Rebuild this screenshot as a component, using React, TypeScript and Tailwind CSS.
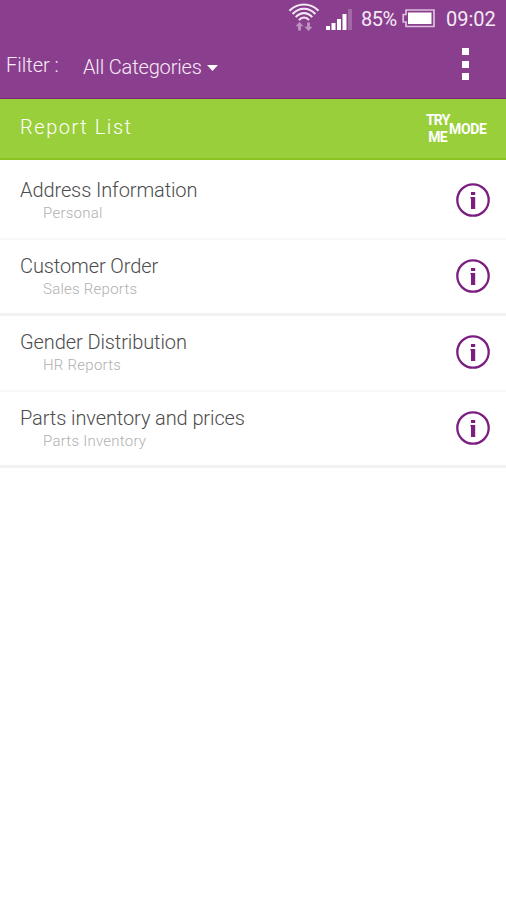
const reports = [
  { title: "Address Information", category: "Personal" },
  { title: "Customer Order", category: "Sales Reports" },
  { title: "Gender Distribution", category: "HR Reports" },
  { title: "Parts inventory and prices", category: "Parts Inventory" },
];

function WifiIcon() {
  return (
    <svg width="32" height="30" viewBox="0 0 32 30" fill="none">
      <g stroke="#f6e9f6" strokeWidth="2.1">
        <path d="M1.5 8.8C9.5 0.4 22.5 0.4 30.5 8.8" />
        <path d="M4.6 12C11 5 21 5 27.4 12" />
        <path d="M7.8 15.2C12.4 9.7 19.6 9.7 24.2 15.2" />
        <path d="M11 18.2C13.8 14.6 18.2 14.6 21 18.2" />
      </g>
      <g fill="#c193c3">
        <path d="M11.5 20l4 4.3h-2.6V28.5h-2.8v-4.2H7.5z" />
        <path d="M20.5 29l-4-4.3h2.6v-4.2h2.8v4.2h2.6z" />
      </g>
    </svg>
  );
}

function SignalIcon() {
  return (
    <svg width="27" height="22" viewBox="0 0 27 22" fill="#ffffff">
      <rect x="0" y="17" width="4" height="4" />
      <rect x="5.5" y="14" width="4" height="7" />
      <rect x="11" y="10" width="4" height="11" />
      <rect x="16.5" y="5" width="4" height="16" />
      <rect x="22" y="0" width="4" height="21" fill="#a468a6" />
    </svg>
  );
}

function BatteryIcon() {
  return (
    <svg width="34" height="19" viewBox="0 0 34 19" fill="none">
      <path d="M4 1H32V17.5H4V13H1.2V5.5H4Z" stroke="#dcbfdd" strokeWidth="1.7" />
      <rect x="6" y="3.5" width="23.5" height="11.5" fill="#ffffff" />
    </svg>
  );
}

function InfoIcon() {
  return (
    <svg width="36" height="36" viewBox="0 0 36 36" fill="none">
      <circle cx="18" cy="18" r="15.7" stroke="#7a1f80" strokeWidth="2.3" />
      <rect x="16" y="10" width="4.2" height="3" fill="#7a1f80" />
      <path d="M15.4 15H20.2V27H16V16.6H15.4Z" fill="#7a1f80" />
    </svg>
  );
}

function StatusBar() {
  return (
    <div className="flex h-[38px] items-start text-[20px] leading-[38px] text-[#f6e9f6]">
      <div className="ml-[288px] mt-[2px] w-[38px]">
        <WifiIcon />
      </div>
      <div className="mt-[9px] w-[35px]">
        <SignalIcon />
      </div>
      <span className="w-[41px] whitespace-nowrap tracking-[-0.5px]">85%</span>
      <div className="mt-[9px] w-[44px]">
        <BatteryIcon />
      </div>
      <span className="whitespace-nowrap">09:02</span>
    </div>
  );
}

function FilterBar() {
  return (
    <div className="flex h-[61px] items-start text-[20px] font-light text-[#f8ebf8]">
      <span className="ml-[6px] mt-[12px] w-[77px] leading-[30px]">Filter :</span>
      <button className="mt-[14px] flex items-center leading-[30px] tracking-[-0.15px]">
        All Categories
        <svg className="ml-[5px] mt-[2px]" width="11" height="6" viewBox="0 0 11 6">
          <path d="M0 0H11L5.5 6Z" fill="#ffffff" />
        </svg>
      </button>
      <button className="ml-auto mr-[37px] mt-[10px] flex flex-col gap-[5.5px]">
        <span className="size-[7px] bg-white" />
        <span className="size-[7px] bg-white" />
        <span className="size-[7px] bg-white" />
      </button>
    </div>
  );
}

export default function App() {
  return (
    <div className="min-h-screen w-full bg-white font-['Roboto',sans-serif]">
      <header className="h-[99px] border-b border-[#7b2678] bg-[#893f8d]">
        <StatusBar />
        <FilterBar />
      </header>

      <div className="flex h-[61px] items-start justify-between border-b-2 border-[#8bc323] bg-[#99cf3b] pl-[20px] pr-[18px] text-white">
        <h1 className="mt-[13px] text-[20px] leading-[30px] font-light tracking-[1.55px]">Report List</h1>
        <div className="mt-[13px] flex items-center text-[14px] font-bold leading-[17px] tracking-[-0.8px]">
          <div className="w-[23px] text-center">
            <div>TRY</div>
            <div>ME</div>
          </div>
          <span className="w-[39px] text-[14px] tracking-[-0.3px]">MODE</span>
        </div>
      </div>

      <ul>
        {reports.map((report, i) => (
          <li
            key={report.title}
            className={`flex items-start justify-between pl-[20px] pr-[15px] ${
              i === 0 ? "h-[80px] pt-[15px]" : "h-[76px] pt-[11px]"
            } ${i % 2 === 0 ? "border-b-2 border-[#f7f7f7]" : "border-b-3 border-[#f2f2f2]"}`}
          >
            <div className="font-light">
              <div className="text-[20px] leading-[30px] tracking-[-0.1px] text-[#4c4c4c]">{report.title}</div>
              <div className="-mt-[1px] pl-[23px] text-[15px] leading-[18px] tracking-[0.25px] text-[#b0b0b0]">{report.category}</div>
            </div>
            <div className="mt-[7px]">
              <InfoIcon />
            </div>
          </li>
        ))}
      </ul>
    </div>
  );
}
